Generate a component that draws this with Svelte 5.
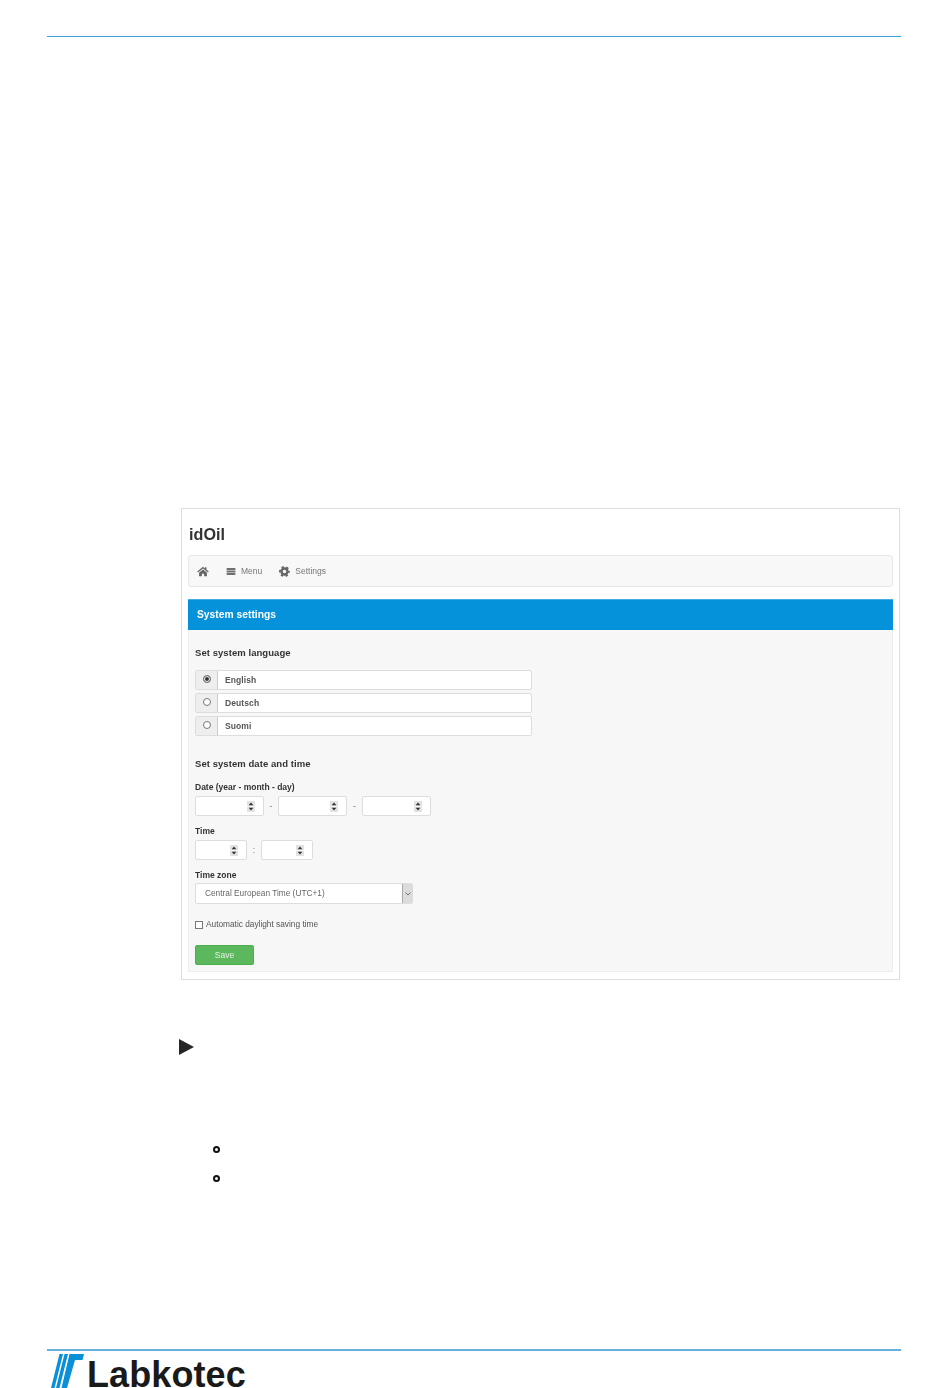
<script>
  const languages = [
    { label: 'English', checked: true },
    { label: 'Deutsch', checked: false },
    { label: 'Suomi', checked: false }
  ];
  const dateFields = [69, 69, 69];
</script>

{#snippet spinner(width)}
  <div class="num" style="width: {width}px">
    <span class="spin">
      <svg viewBox="0 0 8 11" width="8" height="11">
        <rect width="8" height="11" fill="#e2e2e2" />
        <path d="M0 5h8v1H0Z" fill="#f6f6f6" />
        <path d="M4 1.500 6.300 4.300H1.700Z M4 9.500 6.300 6.700H1.700Z" fill="#333" />
      </svg>
    </span>
  </div>
{/snippet}

<div class="page">
  <div class="rule"></div>

  <section class="shot">
    <h1>idOil</h1>

    <nav>
      <svg class="home" viewBox="0 0 14 12" width="12" height="11">
        <path d="M7 0.500 0.300 6l.9 1.100L7 2.400l5.800 4.700.9-1.100L11 3.800V1H9.300v1.400Z M2.400 7.400V11.500h3.300V8.500h2.600v3h3.300V7.400L7 3.700Z" fill="#666" />
      </svg>
      <a class="menu">
        <svg viewBox="0 0 10 8" width="10" height="7">
          <path d="M0 0h10v2.200H0Z M0 2.900h10v2.200H0Z M0 5.800h10V8H0Z" fill="#707070" />
        </svg>
        Menu
      </a>
      <a class="settings">
        <svg viewBox="0 0 12 12" width="11" height="11">
          <circle cx="6" cy="6" r="3.300" fill="none" stroke="#666" stroke-width="2.600" />
          <circle cx="6" cy="6" r="5" fill="none" stroke="#666" stroke-width="2" stroke-dasharray="2.600 2.636" stroke-dashoffset="1.300" />
        </svg>
        Settings
      </a>
    </nav>

    <div class="panel">
      <div class="panel-head">System settings</div>
      <div class="panel-body">
        <h2 class="lang-title">Set system language</h2>
        <div class="langs">
          {#each languages as lang}
            <div class="lang">
              <span class="addon"><span class="radio" class:on={lang.checked}></span></span>
              <span class="lang-label">{lang.label}</span>
            </div>
          {/each}
        </div>

        <h2 class="date-title">Set system date and time</h2>

        <div class="lbl">Date (year - month - day)</div>
        <div class="inputs">
          {#each dateFields as w, i}
            {#if i > 0}<span class="sep" class:wide={i === 2}>-</span>{/if}
            {@render spinner(w)}
          {/each}
        </div>

        <div class="lbl">Time</div>
        <div class="inputs">
          {@render spinner(52)}
          <span class="sep">:</span>
          {@render spinner(52)}
        </div>

        <div class="lbl">Time zone</div>
        <div class="select">
          <span>Central European Time (UTC+1)</span>
          <span class="caret">
            <svg viewBox="0 0 6 4" width="6" height="4"><path d="M.5.5 3 3 5.500.5" fill="none" stroke="#555" stroke-width=".8" /></svg>
          </span>
        </div>

        <label class="check"><span class="box"></span>Automatic daylight saving time</label>

        <button>Save</button>
      </div>
    </div>
  </section>

  <div class="arrow"></div>
  <ul>
    <li></li>
    <li></li>
  </ul>

  <footer>
    <div class="rule bottom"></div>
    <div class="logo">
      <svg viewBox="0 0 33 34" width="33" height="34">
        <path d="M8.500 0H12L3.500 34H0Z M13.500 0H17L8.500 34H5Z M18.500 0H33l-1.500 6H24L16 34H10.500Z" fill="#0b8fd6" />
      </svg>
      <span>Labkotec</span>
    </div>
  </footer>
</div>

<style>
  :global(body) { margin: 0; background: #fff; }
  .page {
    width: 950px;
    height: 1388px;
    overflow: hidden;
    display: flex;
    flex-direction: column;
    font-family: "Liberation Sans", Arial, sans-serif;
    color: #333;
  }
  .rule { height: 1px; margin: 36px 49px 0 47px; background: #3f9fdc; }
  .rule.bottom { height: 2px; margin-top: 0; background: #6aaedb; }

  .shot {
    box-sizing: border-box;
    width: 719px;
    height: 472px;
    margin: 471px 0 0 181px;
    padding: 0 6px;
    border: 1px solid #ddd;
    filter: blur(0.3px);
  }
  h1 {
    margin: 0;
    padding: 16px 0 0 1px;
    height: 30px;
    font-size: 16.200px;
    line-height: 18px;
    font-weight: 700;
  }
  nav {
    box-sizing: border-box;
    height: 32px;
    display: flex;
    align-items: center;
    padding-left: 8px;
    background: #f8f8f8;
    border: 1px solid #e7e7e7;
    border-radius: 3px;
    font-size: 8.500px;
    color: #777;
  }
  nav a { display: flex; align-items: center; }
  .menu { margin-left: 17px; gap: 5px; }
  .settings { margin-left: 17px; gap: 5px; }

  .panel { margin-top: 12px; }
  .panel-head {
    box-sizing: border-box;
    height: 31px;
    padding-left: 9px;
    background: #0592da;
    border-top: 1px solid #45ade3;
    color: #fff;
    font-size: 10.300px;
    font-weight: 700;
    line-height: 30px;
  }
  .panel-body {
    box-sizing: border-box;
    height: 342px;
    padding: 0 6px;
    background: #f7f7f7;
    border: solid #eee;
    border-width: 0 1px 1px;
  }
  h2 {
    margin: 0;
    font-size: 9.500px;
    line-height: 12px;
    font-weight: 700;
    letter-spacing: 0.06px;
  }
  .lang-title { padding-top: 17px; }
  .langs { margin-top: 11px; display: flex; flex-direction: column; gap: 3px; width: 337px; }
  .lang {
    box-sizing: border-box;
    height: 20px;
    display: flex;
    background: #fff;
    border: 1px solid #ddd;
    border-radius: 2px;
    overflow: hidden;
  }
  .addon {
    width: 22px;
    background: #eee;
    border-right: 1px solid #ccc;
    display: flex;
    justify-content: center;
    padding-top: 4px;
    box-sizing: border-box;
  }
  .radio {
    box-sizing: border-box;
    width: 8px;
    height: 8px;
    border: 1px solid #777;
    border-radius: 50%;
    background: #fff;
  }
  .radio.on { background: #333; box-shadow: inset 0 0 0 1px #fff; }
  .lang-label {
    padding-left: 7px;
    font-size: 8.500px;
    font-weight: 700;
    line-height: 19px;
    color: #555;
    letter-spacing: 0.1px;
  }
  .date-title { margin-top: 22px; }
  .lbl {
    margin-top: 10px;
    font-size: 8.500px;
    font-weight: 700;
    line-height: 11px;
  }
  .date-title + .lbl { margin-top: 12px; }
  .inputs { margin-top: 3px; display: flex; align-items: center; }
  .num {
    box-sizing: border-box;
    height: 20px;
    background: #fff;
    border: 1px solid #ddd;
    border-radius: 2px;
    display: flex;
    align-items: center;
    justify-content: flex-end;
    padding-right: 8px;
  }
  .spin { display: flex; }
  .sep { width: 14px; text-align: center; font-size: 8.500px; color: #777; }
  .sep.wide { width: 15px; }

  .select {
    box-sizing: border-box;
    width: 218px;
    height: 21px;
    margin-top: 2px;
    display: flex;
    justify-content: space-between;
    background: #fff;
    border: 1px solid #ddd;
    border-radius: 2px;
    padding-left: 9px;
    font-size: 8.300px;
    line-height: 19px;
    color: #666;
  }
  .caret {
    width: 9px;
    background: #dcdcdc;
    border-left: 1px solid #aaa;
    display: flex;
    align-items: center;
    justify-content: center;
  }
  .check {
    display: flex;
    align-items: center;
    gap: 3px;
    margin-top: 15px;
    font-size: 8.300px;
    line-height: 11px;
    color: #555;
  }
  .box {
    box-sizing: border-box;
    width: 8px;
    height: 8px;
    background: #fff;
    border: 1px solid #777;
  }
  button {
    display: block;
    width: 59px;
    height: 20px;
    margin-top: 15px;
    padding: 0;
    background: #5cb85c;
    border: 1px solid #4cae4c;
    border-radius: 2px;
    color: #e4f3e4;
    font-family: inherit;
    font-size: 8.500px;
  }

  .arrow {
    width: 0;
    height: 0;
    margin: 59px 0 0 179px;
    border-style: solid;
    border-width: 8.500px 0 8.500px 15px;
    border-color: transparent transparent transparent #262626;
  }
  ul {
    list-style: none;
    margin: 91px 0 0 213px;
    padding: 0;
    display: flex;
    flex-direction: column;
    gap: 22px;
  }
  li {
    box-sizing: border-box;
    width: 7px;
    height: 7px;
    border: 2px solid #111;
    border-radius: 50%;
  }
  footer { margin-top: auto; height: 39px; }
  .logo {
    display: flex;
    align-items: flex-start;
    margin: 3px 0 0 51px;
    gap: 3px;
    color: #1a1a1a;
  }
  .logo svg { flex: none; }
  .logo span {
    margin-top: 2.500px;
    font-size: 36px;
    line-height: 36px;
    font-weight: 700;
    letter-spacing: 0.1px;
  }
</style>
